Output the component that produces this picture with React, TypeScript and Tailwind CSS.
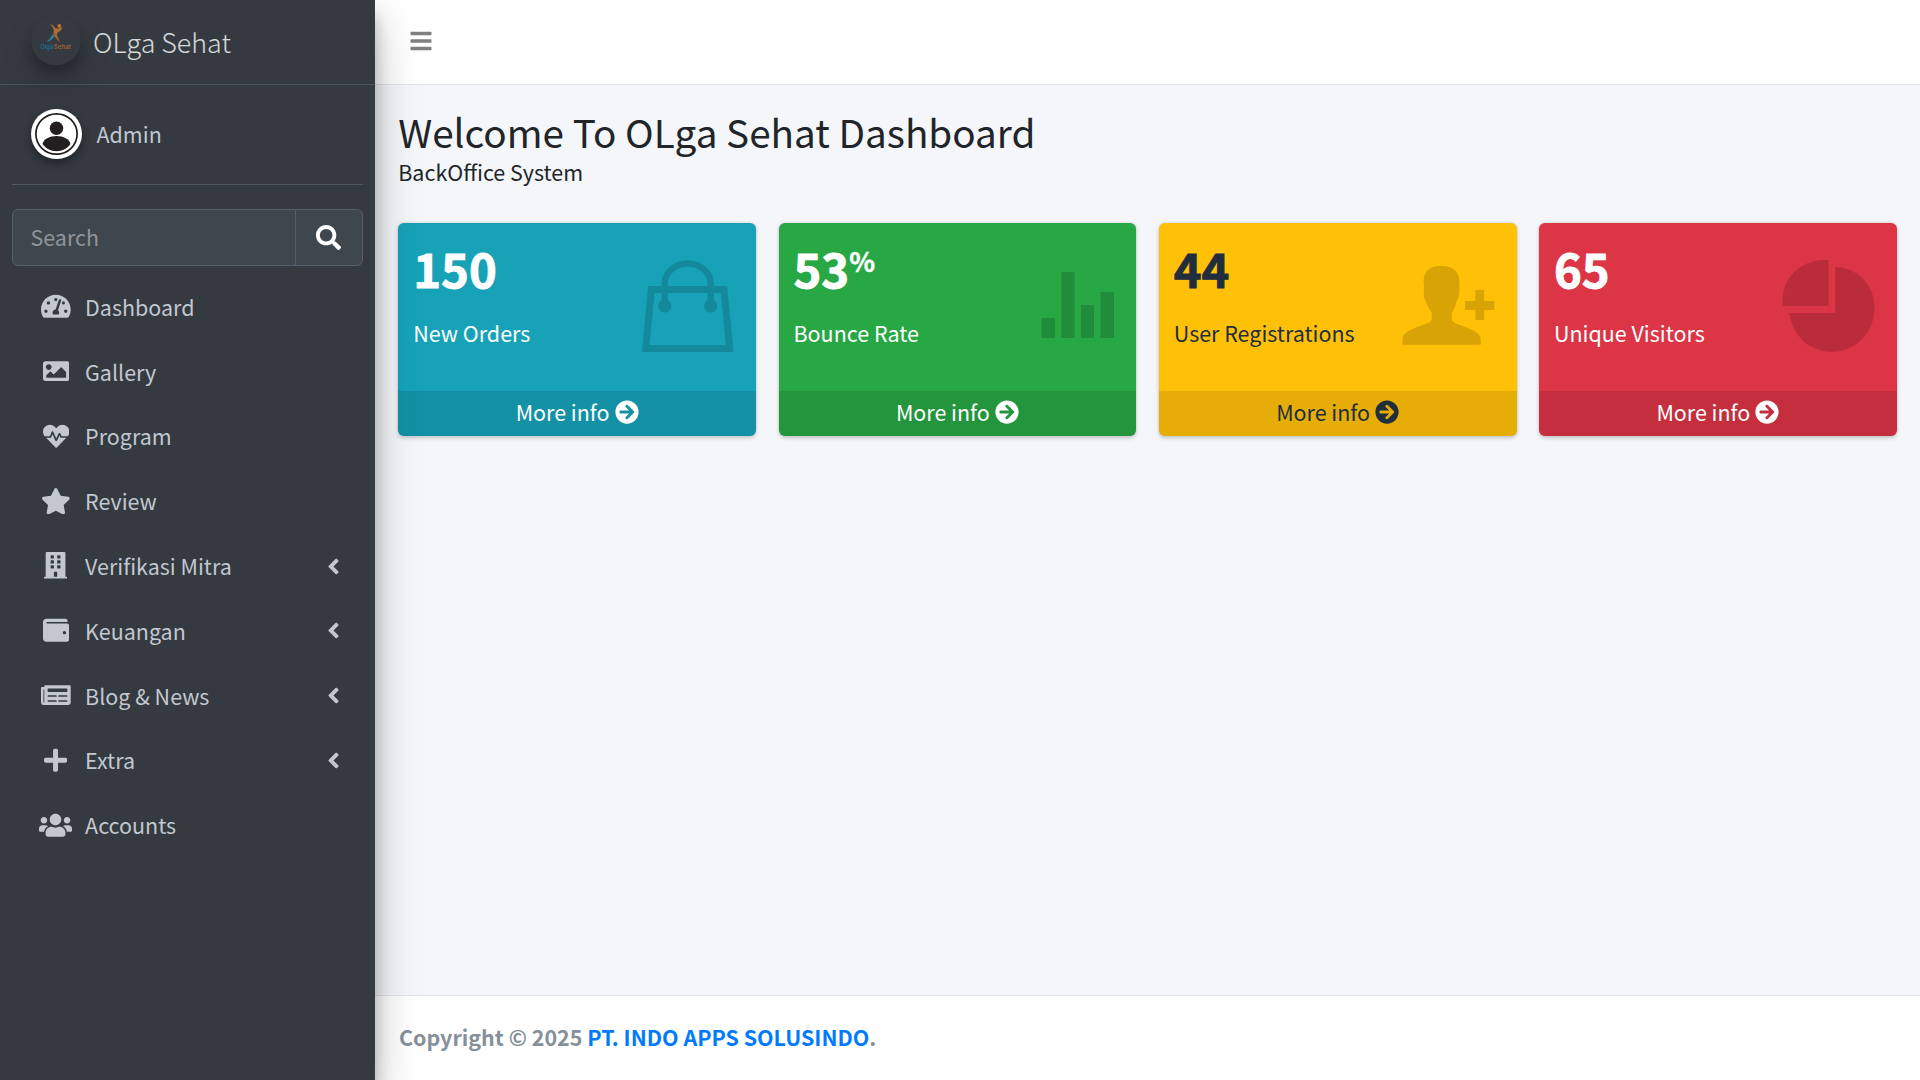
import type { ReactNode } from "react";
import type { IconType } from "react-icons";
import {
  FaAngleLeft,
  FaArrowCircleRight,
  FaBars,
  FaBuilding,
  FaHeartbeat,
  FaImage,
  FaNewspaper,
  FaPlus,
  FaSearch,
  FaStar,
  FaTachometerAlt,
  FaUsers,
  FaWallet,
} from "react-icons/fa";

type NavEntry = { label: string; Icon: IconType; size: string; expandable?: boolean };

const nav: NavEntry[] = [
  { label: "Dashboard", Icon: FaTachometerAlt, size: "w-[29.700px]" },
  { label: "Gallery", Icon: FaImage, size: "w-[26.400px]" },
  { label: "Program", Icon: FaHeartbeat, size: "w-[26.400px]" },
  { label: "Review", Icon: FaStar, size: "w-[29.700px]" },
  { label: "Verifikasi Mitra", Icon: FaBuilding, size: "w-[23.100px]", expandable: true },
  { label: "Keuangan", Icon: FaWallet, size: "w-[26.400px]", expandable: true },
  { label: "Blog & News", Icon: FaNewspaper, size: "w-[29.700px]", expandable: true },
  { label: "Extra", Icon: FaPlus, size: "w-[23.100px]", expandable: true },
  { label: "Accounts", Icon: FaUsers, size: "w-[33px]" },
];

function BrandLogo() {
  return (
    <div className="size-[49.5px] shrink-0 rounded-full opacity-80 shadow-[0_15px_30px_rgba(0,0,0,0.19),0_9px_9px_rgba(0,0,0,0.23)] bg-[#343a40]">
      <svg viewBox="0 0 49.5 49.5" className="size-full">
        <defs>
          <linearGradient id="leg" x1="0" y1="1" x2="1" y2="0">
            <stop offset="0" stopColor="#1687b0" />
            <stop offset="1" stopColor="#3b8f9b" />
          </linearGradient>
          <linearGradient id="torso" x1="0" y1="0" x2="0" y2="1">
            <stop offset="0" stopColor="#d68a2a" />
            <stop offset="1" stopColor="#c9562f" />
          </linearGradient>
        </defs>
        <circle cx="28.3" cy="10" r="1.9" fill="#d9822b" />
        <path d="M19 8 Q22.5 9 24 12 Q28 13.5 31.5 11 Q30 15.500 26.500 16.500 Q25.500 18.500 27 21.500 L29 26.500 Q25 23 23 19.500 Q22 17 23 14 Q21.500 10.500 19 8Z" fill="url(#torso)" />
        <path d="M22.200 17.500 L23.500 20.500 Q20.500 25 15.500 26 Q18 23.500 22.200 17.500Z" fill="url(#leg)" />
        <g fontSize="6" fontWeight="600" fontFamily="Inter, sans-serif">
          <text x="9.200" y="33" textLength="13.300" lengthAdjust="spacingAndGlyphs" fill="#1a7ba3">Olga</text>
          <text x="22.800" y="33" textLength="17.200" lengthAdjust="spacingAndGlyphs" fill="#b86a38">Sehat</text>
        </g>
      </svg>
    </div>
  );
}

function Avatar() {
  return (
    <svg viewBox="0 0 51 50" className="h-[50px] w-[51px] shrink-0 rounded-full shadow-[0_4.5px_9px_rgba(0,0,0,0.16),0_4.5px_9px_rgba(0,0,0,0.23)]">
      <rect width="51" height="50" fill="#fff" />
      <ellipse cx="25.500" cy="25" rx="20.600" ry="20.200" fill="none" stroke="#231f20" strokeWidth="1.700" />
      <circle cx="25.500" cy="19.300" r="6.700" fill="#231f20" />
      <path d="M11.500 35 C12.500 30 18.500 27 25.500 27 S38.500 30 39.500 35 C36.500 39.500 31.500 42.200 25.500 42.200 S14.500 39.500 11.500 35Z" fill="#231f20" />
    </svg>
  );
}

function BagIcon() {
  return (
    <svg viewBox="0.300 0 92 92" className="size-[92px]">
      <g fill="none" stroke="currentColor">
        <path d="M9.700 29.500 H82.300 L88 88.500 H4 Z" strokeWidth="7" />
        <path d="M23 46 V23.500 a23 20 0 0 1 46 0 V46" strokeWidth="6.300" />
      </g>
      <circle cx="23" cy="46" r="6.600" fill="currentColor" />
      <circle cx="69" cy="46" r="6.600" fill="currentColor" />
    </svg>
  );
}

function BarsIcon() {
  return (
    <svg viewBox="0 0 92 92" className="size-[92px]" fill="currentColor">
      <path d="M19.500 58H33V78H19.500zM39.200 12H52.500V78H39.200zM59 45H72V78H59zM78.500 32H92V78H78.500z" />
    </svg>
  );
}

function PersonAddIcon() {
  return (
    <svg viewBox="1.200 0 92 92" className="size-[92px] overflow-visible" fill="currentColor">
      <path d="M0.700 84.700C0.700 75 1 75 7 70.800C14 67 25 64 28.500 61.500Q30 60.500 30 57V52.500C26 48 24.500 43 23.800 40.500C21.800 39 21.800 34 22.300 29.500C21.800 28.500 21.900 27 22.300 26.500C20 13 26 6 39.500 6S59 13 57.500 26.500C58 27 58 28.500 57.500 29.500C57.500 34 57 39 55 40.500C54 45 52.500 49 50 53V57Q50 60.500 51 61.500C54 64 65 67 72 70.800C78.500 75 79 75 79 84.700Z" />
      <path d="M73.500 30H82.300V41H92.500V50H82.300V60H73.500V50H63.200V41H73.500z" />
    </svg>
  );
}

function PieIcon() {
  return (
    <svg viewBox="1 0 92 92" className="size-[92px] overflow-visible" fill="currentColor">
      <path d="M46.500 0V46H0.500V40A41 40 0 0 1 40 0Z" />
      <path d="M53 7A39.500 39.500 0 0 1 92.500 46.500V49A43 43 0 0 1 49.500 92A42.500 42.500 0 0 1 7.500 53H53Z" />
    </svg>
  );
}

type Stat = {
  value: string;
  suffix?: string;
  label: string;
  box: string;
  icon: ReactNode;
};

const stats: Stat[] = [
  { value: "150", label: "New Orders", box: "bg-[#17a2b8] text-white", icon: <BagIcon /> },
  { value: "53", suffix: "%", label: "Bounce Rate", box: "bg-[#28a745] text-white", icon: <BarsIcon /> },
  { value: "44", label: "User Registrations", box: "bg-[#ffc107] text-[#1f2d3d]", icon: <PersonAddIcon /> },
  { value: "65", label: "Unique Visitors", box: "bg-[#dc3545] text-white", icon: <PieIcon /> },
];

function StatCard({ value, suffix, label, box, icon }: Stat) {
  return (
    <div className={`relative flex h-[213px] flex-col overflow-hidden rounded-[6px] shadow-[0_0_1.5px_rgba(0,0,0,0.125),0_1.5px_4.5px_rgba(0,0,0,0.2)] ${box}`}>
      <div className="flex-1 px-[15px] pt-[13px]">
        <h3 className="flex h-[63px] text-[47.2px] leading-[63px] font-bold [-webkit-text-stroke:0.9px_currentColor]">
          {value}
          {suffix && <sup className="top-0 text-[26.8px] leading-[49px] [-webkit-text-stroke:0.4px_currentColor]">{suffix}</sup>}
        </h3>
        <p className="mt-[16px] leading-[36px]">{label}</p>
      </div>
      <div className="absolute top-[37px] right-[22px] text-black opacity-15">{icon}</div>
      <a className="flex h-[45px] items-center justify-center gap-[5px] bg-black/10">
        <span className="mb-[4px] leading-[36px]">More info</span>
        <FaArrowCircleRight className="mb-[3px] size-[24px]" />
      </a>
    </div>
  );
}

export default function App() {
  return (
    <div className="flex h-[1080px] w-[1920px] overflow-hidden bg-[#f4f6f9] font-['Noto_Sans_CJK_JP',sans-serif] text-[21.48px] text-[#212529]">
      <aside className="z-10 flex w-[375px] shrink-0 flex-col bg-[#343a40] text-[#c2c7d0] shadow-[0_21px_42px_rgba(0,0,0,0.25),0_15px_15px_rgba(0,0,0,0.22)]">
        <a className="flex h-[85px] shrink-0 items-start gap-[12.500px] border-b border-[#4b545c] pt-[15.500px] pl-[31px]">
          <BrandLogo />
          <span className="text-[26.85px] leading-[52px] font-light text-white/80">OLga Sehat</span>
        </a>
        <div className="mx-[12px] flex h-[100px] items-start gap-[14.500px] border-b border-[#4f5962] pt-[24px] pl-[19px]">
          <Avatar />
          <span className="leading-[50px]">Admin</span>
        </div>
        <div className="mx-[12px] mt-[24px] flex h-[57px] shrink-0 overflow-hidden rounded-[6px] border border-[#56606a] bg-[#3f474e]">
          <span className="flex-1 pl-[17.500px] leading-[53px] text-[#8f959c]">Search</span>
          <button className="flex w-[67px] items-center justify-center border-l border-[#56606a] pr-[1px] pb-[1px] text-white">
            <FaSearch className="size-[25px]" />
          </button>
        </div>
        <nav className="mx-[12px] mt-[12px] flex flex-col gap-[4.800px]">
          {nav.map(({ label, Icon, size, expandable }) => (
            <a key={label} className="flex h-[60px] items-center pr-[24px] pl-[24.500px]">
              <span className="mr-[10.200px] mb-[3px] flex w-[38.400px] justify-center">
                <Icon className={`h-[26.400px] shrink-0 ${size}`} />
              </span>
              <span className="mb-[2px] flex-1">{label}</span>
              {expandable && <FaAngleLeft className="mr-[-1.500px] mb-[2px] h-[25px] w-[15px]" />}
            </a>
          ))}
        </nav>
      </aside>
      <div className="flex flex-1 flex-col">
        <header className="flex h-[85px] shrink-0 items-center border-b border-[#dee2e6] bg-white pb-[2px] pl-[34px]">
          <FaBars className="size-[24px] text-[#808080]" />
        </header>
        <main className="flex-1 px-[23.250px] pt-[20px]">
          <h1 className="h-[52px] text-[38.660px] leading-[52px]">Welcome To OLga Sehat Dashboard</h1>
          <p className="mt-[1px] h-[28px] leading-[28px]">BackOffice System</p>
          <section className="mt-[37px] grid grid-cols-4 gap-[22.500px]">
            {stats.map((s) => (
              <StatCard key={s.label} {...s} />
            ))}
          </section>
        </main>
        <footer className="flex h-[85px] shrink-0 items-center border-t border-[#dee2e6] bg-white px-[24px] pb-[2px] text-[21.45px] font-bold text-[#869099]">
          <p>
            Copyright © 2025 <a className="text-[#007bff]">PT. INDO APPS SOLUSINDO</a>.
          </p>
        </footer>
      </div>
    </div>
  );
}
